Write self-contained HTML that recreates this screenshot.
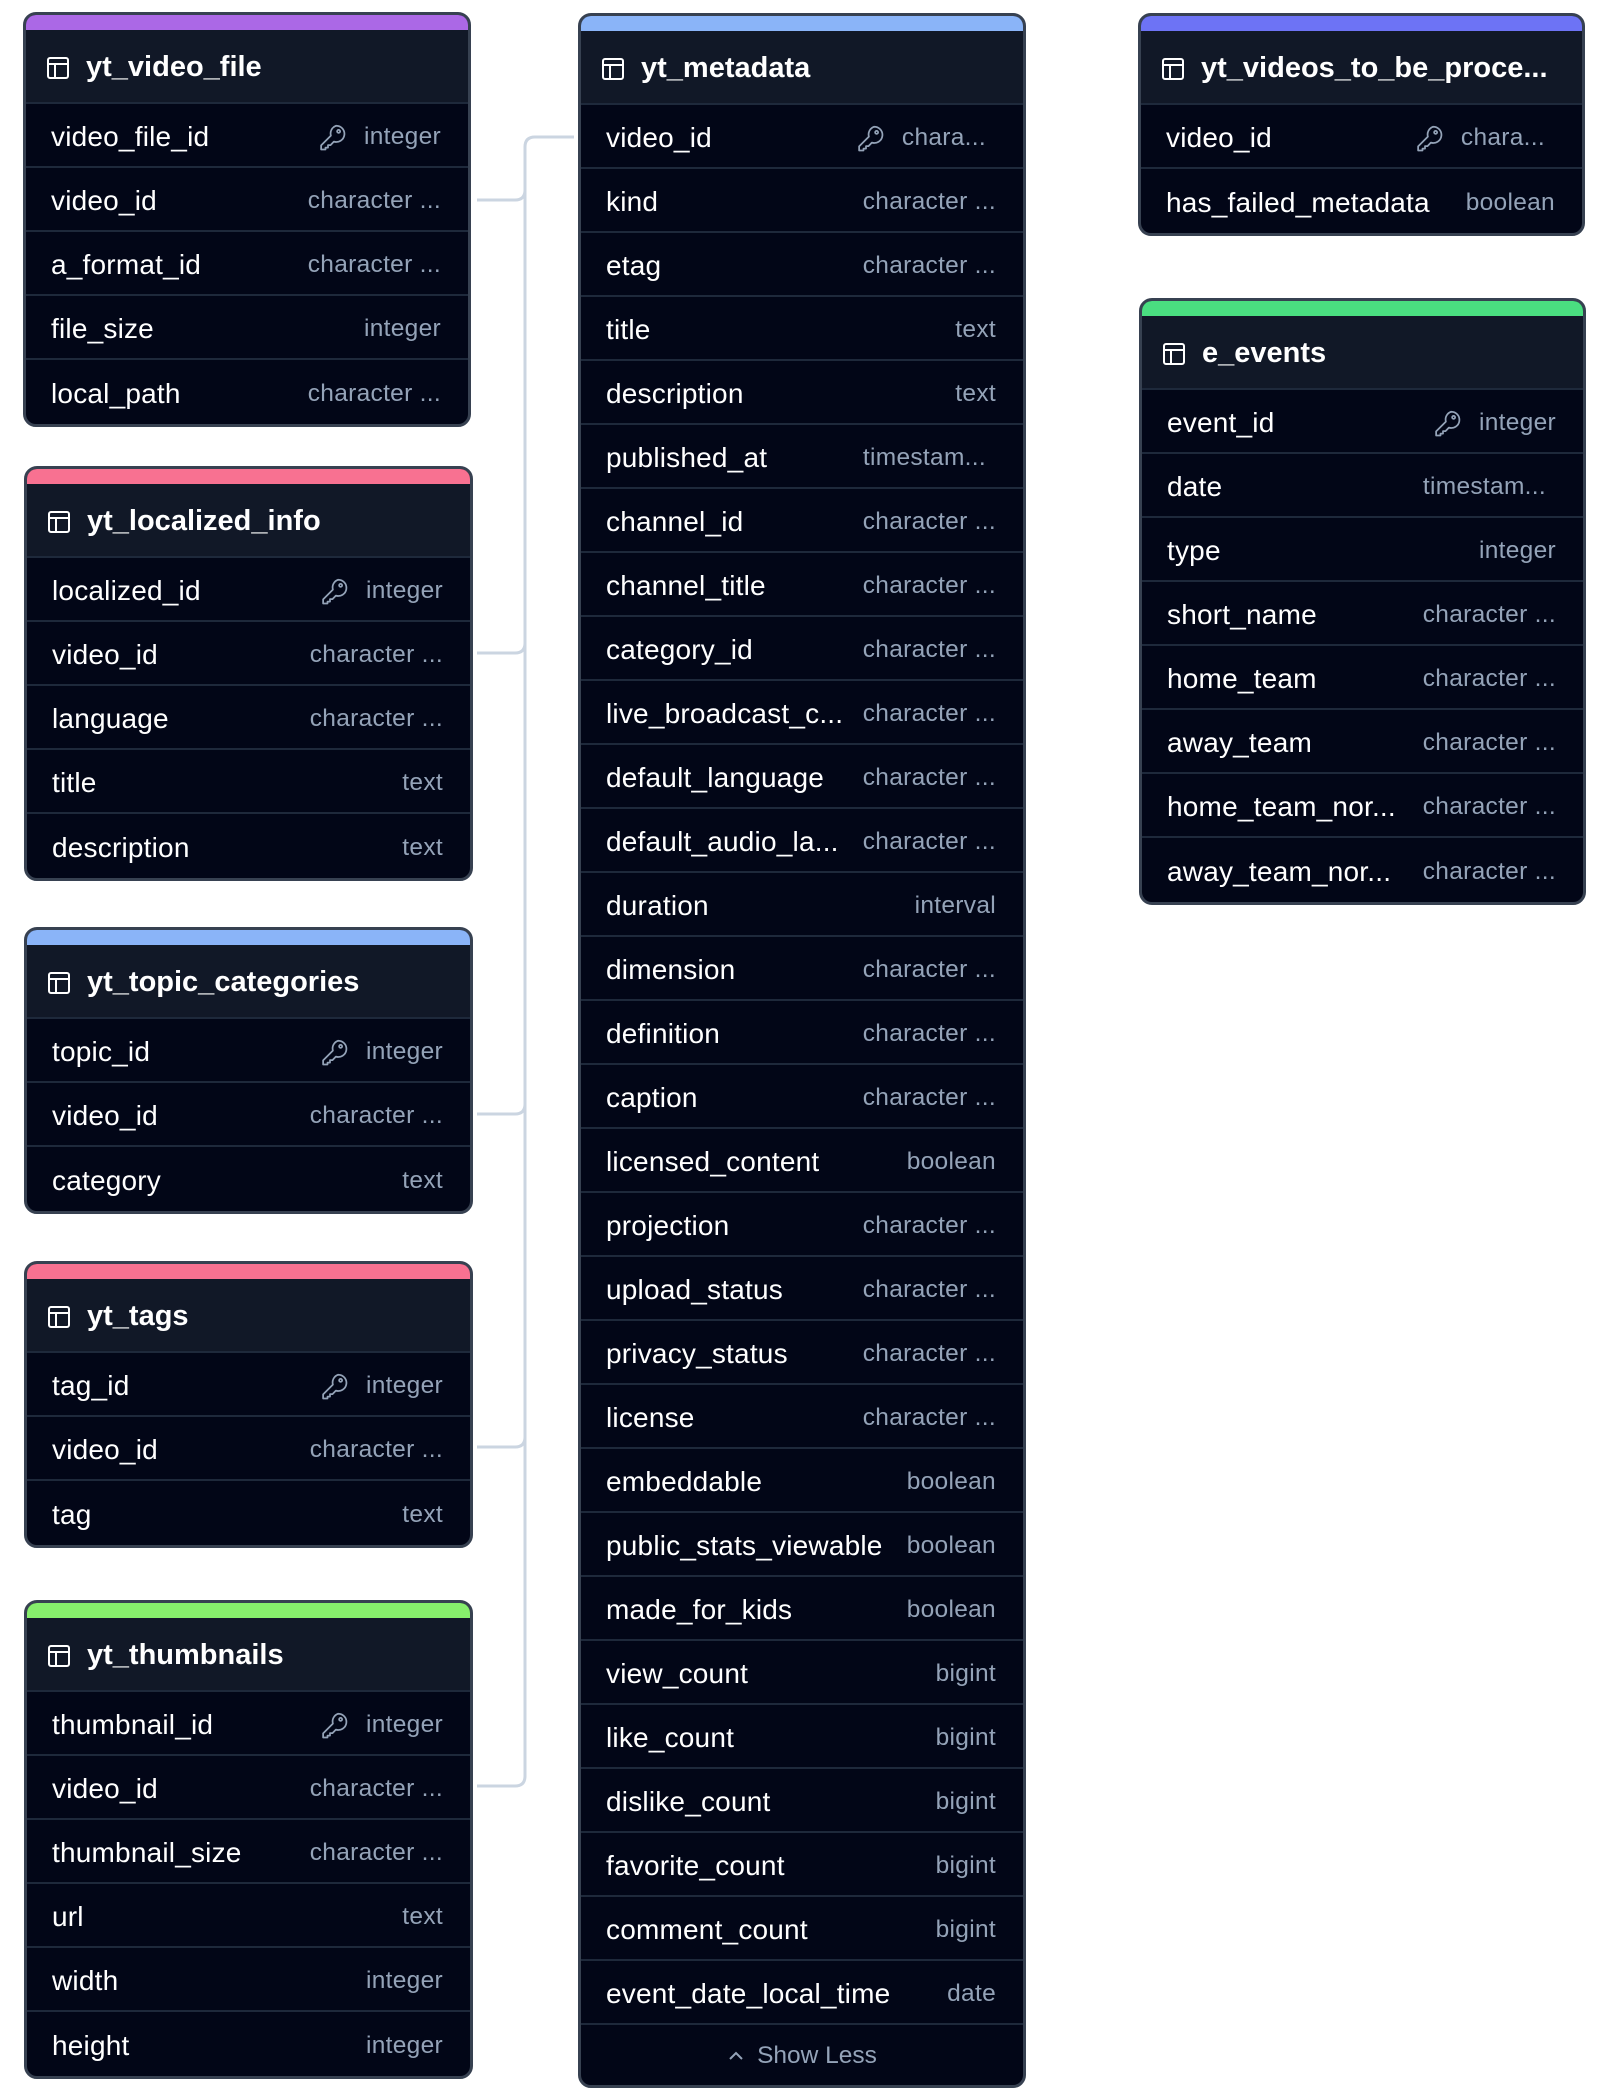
<!DOCTYPE html>
<html><head><meta charset="utf-8"><style>
body{margin:0;width:1612px;height:2099px;background:#fff;position:relative;font-family:"Liberation Sans",sans-serif;overflow:hidden}
.card{position:absolute;background:#020617;border:3px solid #374151;border-radius:13px;overflow:hidden;box-sizing:border-box}
.bar{height:15px}
.hd{height:74px;box-sizing:border-box;background:#111827;display:flex;align-items:center;padding-left:20px;padding-top:3px;font-weight:bold;font-size:29px;color:#fff;border-bottom:2px solid #1e293b;white-space:nowrap}
.hd svg{margin-right:16px;flex:none}
.r{height:64px;box-sizing:border-box;display:flex;align-items:center;justify-content:space-between;padding:3px 27px 0 25px;border-bottom:2px solid #1e293b;white-space:nowrap}
.r .n{color:#fff;font-size:28px;letter-spacing:0.2px}
.r .t{color:#94a3b8;font-size:24.5px;letter-spacing:0.3px;display:flex;align-items:center}
.r .t svg{margin-right:16px}
.sl{height:58px;display:flex;align-items:center;justify-content:center;color:#94a3b8;font-size:24.5px;padding-top:2px}
</style></head><body>
<svg width="1612" height="2099" style="position:absolute;left:0;top:0" fill="none" stroke="#cbd5e1" stroke-width="3">
<path d="M574 137 H535 Q525 137 525 147 V1776 Q525 1786 515 1786 H477"/>
<path d="M477 200 H515 Q525 200 525 190"/>
<path d="M477 653 H515 Q525 653 525 643"/>
<path d="M477 1114 H515 Q525 1114 525 1104"/>
<path d="M477 1447 H515 Q525 1447 525 1437"/>
</svg>

<div class="card" style="left:23px;top:12px;width:448px">
<div class="bar" style="background:#ab68e6"></div>
<div class="hd"><svg width="24" height="24" viewBox="0 0 24 24" fill="none" stroke="#fff" stroke-width="2"><rect x="2" y="2" width="20" height="20" rx="2"/><path d="M2 8h20M9 8v14"/></svg>yt_video_file</div>
<div class="r"><span class="n">video_file_id</span><span class="t"><svg width="30" height="30" viewBox="0 0 24 24" fill="none" stroke="#94a3b8" stroke-width="1.4" stroke-linejoin="round"><path d="M14.5 3a6.5 6.5 0 1 1-1.8 12.7L10 18.5H8v2H6v1.5H2.5v-3.3l7.8-7.8A6.5 6.5 0 0 1 14.5 3z"/><circle cx="16.5" cy="7.5" r="1.2"/></svg>integer</span></div>
<div class="r"><span class="n">video_id</span><span class="t">character ...</span></div>
<div class="r"><span class="n">a_format_id</span><span class="t">character ...</span></div>
<div class="r"><span class="n">file_size</span><span class="t">integer</span></div>
<div class="r" style="border:0"><span class="n">local_path</span><span class="t">character ...</span></div>
</div>

<div class="card" style="left:24px;top:466px;width:449px">
<div class="bar" style="background:#f87191"></div>
<div class="hd"><svg width="24" height="24" viewBox="0 0 24 24" fill="none" stroke="#fff" stroke-width="2"><rect x="2" y="2" width="20" height="20" rx="2"/><path d="M2 8h20M9 8v14"/></svg>yt_localized_info</div>
<div class="r"><span class="n">localized_id</span><span class="t"><svg width="30" height="30" viewBox="0 0 24 24" fill="none" stroke="#94a3b8" stroke-width="1.4" stroke-linejoin="round"><path d="M14.5 3a6.5 6.5 0 1 1-1.8 12.7L10 18.5H8v2H6v1.5H2.5v-3.3l7.8-7.8A6.5 6.5 0 0 1 14.5 3z"/><circle cx="16.5" cy="7.5" r="1.2"/></svg>integer</span></div>
<div class="r"><span class="n">video_id</span><span class="t">character ...</span></div>
<div class="r"><span class="n">language</span><span class="t">character ...</span></div>
<div class="r"><span class="n">title</span><span class="t">text</span></div>
<div class="r" style="border:0"><span class="n">description</span><span class="t">text</span></div>
</div>

<div class="card" style="left:24px;top:927px;width:449px">
<div class="bar" style="background:#8ab4f8"></div>
<div class="hd"><svg width="24" height="24" viewBox="0 0 24 24" fill="none" stroke="#fff" stroke-width="2"><rect x="2" y="2" width="20" height="20" rx="2"/><path d="M2 8h20M9 8v14"/></svg>yt_topic_categories</div>
<div class="r"><span class="n">topic_id</span><span class="t"><svg width="30" height="30" viewBox="0 0 24 24" fill="none" stroke="#94a3b8" stroke-width="1.4" stroke-linejoin="round"><path d="M14.5 3a6.5 6.5 0 1 1-1.8 12.7L10 18.5H8v2H6v1.5H2.5v-3.3l7.8-7.8A6.5 6.5 0 0 1 14.5 3z"/><circle cx="16.5" cy="7.5" r="1.2"/></svg>integer</span></div>
<div class="r"><span class="n">video_id</span><span class="t">character ...</span></div>
<div class="r" style="border:0"><span class="n">category</span><span class="t">text</span></div>
</div>

<div class="card" style="left:24px;top:1261px;width:449px">
<div class="bar" style="background:#f87191"></div>
<div class="hd"><svg width="24" height="24" viewBox="0 0 24 24" fill="none" stroke="#fff" stroke-width="2"><rect x="2" y="2" width="20" height="20" rx="2"/><path d="M2 8h20M9 8v14"/></svg>yt_tags</div>
<div class="r"><span class="n">tag_id</span><span class="t"><svg width="30" height="30" viewBox="0 0 24 24" fill="none" stroke="#94a3b8" stroke-width="1.4" stroke-linejoin="round"><path d="M14.5 3a6.5 6.5 0 1 1-1.8 12.7L10 18.5H8v2H6v1.5H2.5v-3.3l7.8-7.8A6.5 6.5 0 0 1 14.5 3z"/><circle cx="16.5" cy="7.5" r="1.2"/></svg>integer</span></div>
<div class="r"><span class="n">video_id</span><span class="t">character ...</span></div>
<div class="r" style="border:0"><span class="n">tag</span><span class="t">text</span></div>
</div>

<div class="card" style="left:24px;top:1600px;width:449px">
<div class="bar" style="background:#86ef6c"></div>
<div class="hd"><svg width="24" height="24" viewBox="0 0 24 24" fill="none" stroke="#fff" stroke-width="2"><rect x="2" y="2" width="20" height="20" rx="2"/><path d="M2 8h20M9 8v14"/></svg>yt_thumbnails</div>
<div class="r"><span class="n">thumbnail_id</span><span class="t"><svg width="30" height="30" viewBox="0 0 24 24" fill="none" stroke="#94a3b8" stroke-width="1.4" stroke-linejoin="round"><path d="M14.5 3a6.5 6.5 0 1 1-1.8 12.7L10 18.5H8v2H6v1.5H2.5v-3.3l7.8-7.8A6.5 6.5 0 0 1 14.5 3z"/><circle cx="16.5" cy="7.5" r="1.2"/></svg>integer</span></div>
<div class="r"><span class="n">video_id</span><span class="t">character ...</span></div>
<div class="r"><span class="n">thumbnail_size</span><span class="t">character ...</span></div>
<div class="r"><span class="n">url</span><span class="t">text</span></div>
<div class="r"><span class="n">width</span><span class="t">integer</span></div>
<div class="r" style="border:0"><span class="n">height</span><span class="t">integer</span></div>
</div>

<div class="card" style="left:578px;top:13px;width:448px">
<div class="bar" style="background:#8ab4f8"></div>
<div class="hd"><svg width="24" height="24" viewBox="0 0 24 24" fill="none" stroke="#fff" stroke-width="2"><rect x="2" y="2" width="20" height="20" rx="2"/><path d="M2 8h20M9 8v14"/></svg>yt_metadata</div>
<div class="r"><span class="n">video_id</span><span class="t" style="margin-right:10px"><svg width="30" height="30" viewBox="0 0 24 24" fill="none" stroke="#94a3b8" stroke-width="1.4" stroke-linejoin="round"><path d="M14.5 3a6.5 6.5 0 1 1-1.8 12.7L10 18.5H8v2H6v1.5H2.5v-3.3l7.8-7.8A6.5 6.5 0 0 1 14.5 3z"/><circle cx="16.5" cy="7.5" r="1.2"/></svg>chara...</span></div>
<div class="r"><span class="n">kind</span><span class="t">character ...</span></div>
<div class="r"><span class="n">etag</span><span class="t">character ...</span></div>
<div class="r"><span class="n">title</span><span class="t">text</span></div>
<div class="r"><span class="n">description</span><span class="t">text</span></div>
<div class="r"><span class="n">published_at</span><span class="t" style="margin-right:10px">timestam...</span></div>
<div class="r"><span class="n">channel_id</span><span class="t">character ...</span></div>
<div class="r"><span class="n">channel_title</span><span class="t">character ...</span></div>
<div class="r"><span class="n">category_id</span><span class="t">character ...</span></div>
<div class="r"><span class="n">live_broadcast_c...</span><span class="t">character ...</span></div>
<div class="r"><span class="n">default_language</span><span class="t">character ...</span></div>
<div class="r"><span class="n">default_audio_la...</span><span class="t">character ...</span></div>
<div class="r"><span class="n">duration</span><span class="t">interval</span></div>
<div class="r"><span class="n">dimension</span><span class="t">character ...</span></div>
<div class="r"><span class="n">definition</span><span class="t">character ...</span></div>
<div class="r"><span class="n">caption</span><span class="t">character ...</span></div>
<div class="r"><span class="n">licensed_content</span><span class="t">boolean</span></div>
<div class="r"><span class="n">projection</span><span class="t">character ...</span></div>
<div class="r"><span class="n">upload_status</span><span class="t">character ...</span></div>
<div class="r"><span class="n">privacy_status</span><span class="t">character ...</span></div>
<div class="r"><span class="n">license</span><span class="t">character ...</span></div>
<div class="r"><span class="n">embeddable</span><span class="t">boolean</span></div>
<div class="r"><span class="n">public_stats_viewable</span><span class="t">boolean</span></div>
<div class="r"><span class="n">made_for_kids</span><span class="t">boolean</span></div>
<div class="r"><span class="n">view_count</span><span class="t">bigint</span></div>
<div class="r"><span class="n">like_count</span><span class="t">bigint</span></div>
<div class="r"><span class="n">dislike_count</span><span class="t">bigint</span></div>
<div class="r"><span class="n">favorite_count</span><span class="t">bigint</span></div>
<div class="r"><span class="n">comment_count</span><span class="t">bigint</span></div>
<div class="r"><span class="n">event_date_local_time</span><span class="t">date</span></div>
<div class="sl"><svg width="18" height="12" viewBox="0 0 18 12" fill="none" stroke="#94a3b8" stroke-width="2" style="margin-right:12px"><path d="M3 9l6-6 6 6"/></svg>Show Less</div>
</div>

<div class="card" style="left:1138px;top:13px;width:447px">
<div class="bar" style="background:#6d73f5"></div>
<div class="hd"><svg width="24" height="24" viewBox="0 0 24 24" fill="none" stroke="#fff" stroke-width="2"><rect x="2" y="2" width="20" height="20" rx="2"/><path d="M2 8h20M9 8v14"/></svg>yt_videos_to_be_proce...</div>
<div class="r"><span class="n">video_id</span><span class="t" style="margin-right:10px"><svg width="30" height="30" viewBox="0 0 24 24" fill="none" stroke="#94a3b8" stroke-width="1.4" stroke-linejoin="round"><path d="M14.5 3a6.5 6.5 0 1 1-1.8 12.7L10 18.5H8v2H6v1.5H2.5v-3.3l7.8-7.8A6.5 6.5 0 0 1 14.5 3z"/><circle cx="16.5" cy="7.5" r="1.2"/></svg>chara...</span></div>
<div class="r" style="border:0"><span class="n">has_failed_metadata</span><span class="t">boolean</span></div>
</div>

<div class="card" style="left:1139px;top:298px;width:447px">
<div class="bar" style="background:#4ade80"></div>
<div class="hd"><svg width="24" height="24" viewBox="0 0 24 24" fill="none" stroke="#fff" stroke-width="2"><rect x="2" y="2" width="20" height="20" rx="2"/><path d="M2 8h20M9 8v14"/></svg>e_events</div>
<div class="r"><span class="n">event_id</span><span class="t"><svg width="30" height="30" viewBox="0 0 24 24" fill="none" stroke="#94a3b8" stroke-width="1.4" stroke-linejoin="round"><path d="M14.5 3a6.5 6.5 0 1 1-1.8 12.7L10 18.5H8v2H6v1.5H2.5v-3.3l7.8-7.8A6.5 6.5 0 0 1 14.5 3z"/><circle cx="16.5" cy="7.5" r="1.2"/></svg>integer</span></div>
<div class="r"><span class="n">date</span><span class="t" style="margin-right:10px">timestam...</span></div>
<div class="r"><span class="n">type</span><span class="t">integer</span></div>
<div class="r"><span class="n">short_name</span><span class="t">character ...</span></div>
<div class="r"><span class="n">home_team</span><span class="t">character ...</span></div>
<div class="r"><span class="n">away_team</span><span class="t">character ...</span></div>
<div class="r"><span class="n">home_team_nor...</span><span class="t">character ...</span></div>
<div class="r" style="border:0"><span class="n">away_team_nor...</span><span class="t">character ...</span></div>
</div>
</body></html>
